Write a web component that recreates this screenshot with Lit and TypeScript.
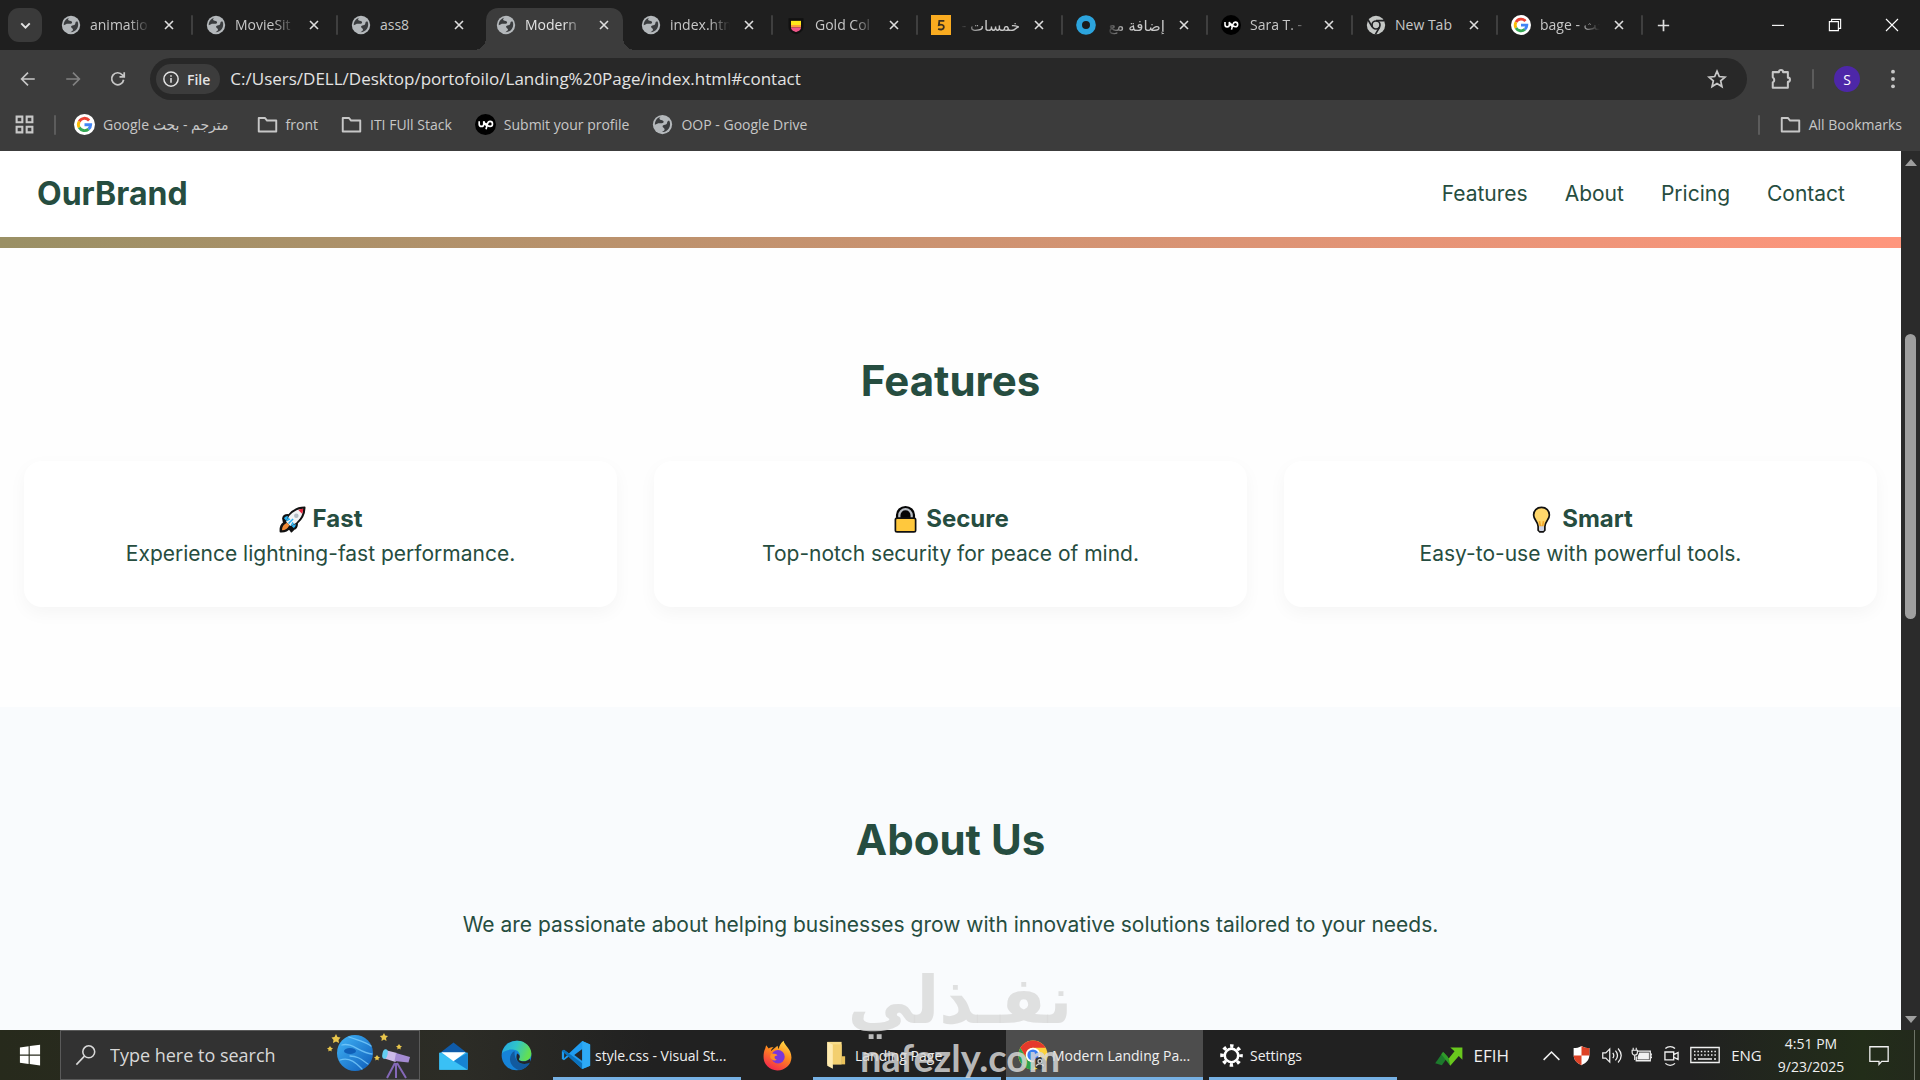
import { LitElement, html, css, svg, nothing, type TemplateResult } from "lit";
import { customElement, property } from "lit/decorators.js";
import { classMap } from "lit/directives/class-map.js";

const UI = css`"Open Sans", "Noto Sans", "DejaVu Sans", sans-serif`;
const PAGE = css`Inter, "Open Sans", sans-serif`;

const shapes: Record<string, TemplateResult> = {
  globe: svg`<circle cx="12" cy="12" r="11" fill="#b4b8bb"/>
    <path d="M10 3.2c-2 1.2-1.800 2.600-.6 3.300 1.400.8 3.200.4 3.800 1.800.5 1.300-.7 2.200-2 2.300-1.700.1-3.900-.5-5.200.4L3.300 12.200C3.100 7.800 6 4.100 10 3.200zM12.500 13.200c1.500-1.200 3.300-.6 4.200-1.800.8-1 .3-2.300 1.300-3.200.5-.5 1.300-.5 1.900-.3 1.200 2.700 1 6-.7 8.600-1.700 2.700-4.700 4.200-7.800 4.200 1-1.200 3.200-1.700 3-3.400-.2-1.300-3.400-2.500-1.900-4.100z" fill="#3a3c3e"/>`,
  google: svg`<circle cx="12" cy="12" r="12" fill="#fff"/>
    <g fill="none" stroke-width="3.400"><path d="M17.300 7.300A7 7 0 0 0 6 8.500" stroke="#ea4335"/>
    <path d="M6 8.500a7 7 0 0 0 0 7" stroke="#fbbc05"/><path d="M6 15.500a7 7 0 0 0 10.600 1.800" stroke="#34a853"/>
    <path d="M16.600 17.300A7 7 0 0 0 19 12.200H12" stroke="#4285f4"/></g>`,
  upwork: svg`<circle cx="12" cy="12" r="12" fill="#000"/>
    <path d="M4.800 8.300v3.300a2.600 2.600 0 0 0 5.200 0V8.300c.8 2.600 2 4.200 3.300 5.300M12.600 17.500l1.700-6.300c.5-1.900 1.500-2.700 2.900-2.700a2.800 2.800 0 1 1 0 5.600c-2.300 0-4-1.700-5.300-3.700" fill="none" stroke="#fff" stroke-width="1.900"/>`,
  shieldGold: svg`<path d="M3 4h18v10c0 5-4 7.500-9 9-5-1.500-9-4-9-9z" fill="#111"/><path d="M6 7h12v5H6z" fill="#ffe81a"/>
    <path d="M6 12h12v3H6z" fill="#ff9d3c"/><path d="M6 15h12c0 3-3 4.500-6 5.400C9 19.500 6 18 6 15z" fill="#f0568a"/>`,
  khamsat: svg`<path d="M0 0h24v24H0z" fill="#f9ab20"/><path d="M16 7h-6l-.6 5c4-1 6.200.2 6 2.700-.2 2.700-3.600 3.500-6.800 1.900" fill="none" stroke="#3a3020" stroke-width="2.200"/>`,
  ring: svg`<circle cx="12" cy="12" r="8.300" fill="#1c1c1c" stroke="#2ca4dd" stroke-width="7"/>`,
  chromeGrey: svg`<circle cx="12" cy="12" r="11" fill="#c4c7c5"/><circle cx="12" cy="12" r="4.800" fill="#c4c7c5" stroke="#202124" stroke-width="2"/>
    <path d="M12 6.800h10M7.600 14.600 2.600 6M16.400 14.600 11.400 23" stroke="#202124" stroke-width="2"/>`,
  close: svg`<path d="m6 6 12 12M18 6 6 18" stroke="currentColor" stroke-width="2.400" fill="none"/>`,
  down: svg`<path d="m6 9 6 6 6-6" stroke="currentColor" stroke-width="2.800" fill="none"/>`,
  plus: svg`<path d="M12 4v16M4 12h16" stroke="currentColor" stroke-width="2.400"/>`,
  minimize: svg`<path d="M4 12.500h16" stroke="currentColor" stroke-width="1.500"/>`,
  restore: svg`<path d="M4.500 7.500h12v12h-12zM7.500 7.500v-3h12v12h-3" stroke="currentColor" stroke-width="1.500" fill="none"/>`,
  winClose: svg`<path d="m4 4 16 16M20 4 4 20" stroke="currentColor" stroke-width="1.500"/>`,
  back: svg`<path d="M21 12H4M12 3.500 3.500 12l8.500 8.500" stroke="currentColor" stroke-width="2.200" fill="none"/>`,
  forward: svg`<path d="M3 12h17M12 3.500l8.500 8.500-8.500 8.500" stroke="currentColor" stroke-width="2.200" fill="none"/>`,
  reload: svg`<path d="M19.500 13A8 8 0 1 1 17.800 6.600L20 9M20.300 3v6.300H14" stroke="currentColor" stroke-width="2.300" fill="none"/>`,
  info: svg`<circle cx="12" cy="12" r="9.500" fill="none" stroke="currentColor" stroke-width="2"/><path d="M12 10.800V17M12 7v2" stroke="currentColor" stroke-width="2"/>`,
  star: svg`<path d="m12 3.500 2.500 5.800 6.200.6-4.700 4.200 1.400 6.200-5.400-3.300-5.400 3.300L8 14.100 3.300 9.900l6.200-.6z" stroke="currentColor" stroke-width="1.900" fill="none"/>`,
  puzzle: svg`<path d="M3 4.500h6.700a2.300 2.300 0 0 1 4.600 0H19.500v6a2.300 2.300 0 0 1 0 4.600v6.400H3v-5.700a3.200 3.200 0 0 0 0-5.600z" stroke="currentColor" stroke-width="2.200" stroke-linejoin="round" fill="none"/>`,
  dots: svg`<g fill="currentColor"><circle cx="12" cy="4" r="2.100"/><circle cx="12" cy="12" r="2.100"/><circle cx="12" cy="20" r="2.100"/></g>`,
  grid: svg`<path d="M3 3h6.500v6.500H3zM14.500 3H21v6.500h-6.500zM3 14.500h6.500V21H3zM14.500 14.500H21V21h-6.500z" stroke="currentColor" stroke-width="2.400" fill="none"/>`,
  folder: svg`<path d="M2 4.500h7l2.500 3H22v12.500H2z" stroke="currentColor" stroke-width="2.200" stroke-linejoin="round" fill="none"/>`,
  rocket: svg`<path d="M3.500 11c.5-2.500 2.500-3.300 5.300-3C12.500 3.500 17 1.200 22.800 1.200c0 5.800-2.300 10.300-6.800 14 .3 2.800-.5 4.800-3 5.500l-2 2-2-3C8 21.500 5 23 1.300 22.800 1 19 2.500 16 4.300 15z" fill="#111" stroke="#111" stroke-width="1.500" stroke-linejoin="round"/>
    <path d="M4.500 11c.8-1.600 2-2 3.600-1.800L6.500 13zM13 19.500c1.600-.8 2-2 1.800-3.600L11 17.500z" fill="#2bb3f3"/>
    <path d="M7 14.800 9.200 17c-1.500 3-3.500 4.400-6.600 4.500.1-3.100 1.400-5.200 4.400-6.700z" fill="#f08a35"/>
    <path d="M9 8.900C12.500 5 16 3 21.500 2.500 21 8 19 11.500 15.100 15L10 17.800 6.300 14z" fill="#f3f3f3"/><path d="M17.200 3.500c1.400-.6 2.700-.9 4.300-1-.1 1.600-.4 2.900-1 4.300z" fill="#e3263c"/>
    <path d="M6.300 14 8.200 10l2 2zM10 17.800l3.500-2-1.600-1.900z" fill="#2bb3f3"/>
    <circle cx="15.400" cy="8.700" r="2" fill="#b4bcc4"/><path d="m8.500 15.500 4-4" stroke="#2bb3f3" stroke-width="1.400"/>`,
  lock: svg`<path d="M4.500 11.500V8a7.500 7 0 0 1 15 0v3.500" fill="#050505" stroke="#050505" stroke-width="2"/><path d="M6.500 11V8.300a5.500 5.500 0 0 1 11 0V11" fill="none" stroke="#b9bec4" stroke-width="2"/>
    <rect x="3" y="10.800" width="18" height="12.200" rx="1.500" fill="#ffc83d" stroke="#111" stroke-width="1.500"/>`,
  bulb: svg`<path d="M12 1.200c-4.300 0-7 3-7 6.800 0 4.300 3.700 5.500 4 10.200v3.300l1.500 1.500h3l1.500-1.500v-3.300C15.300 13.500 19 12.300 19 8c0-3.800-2.700-6.800-7-6.800z" fill="#ffd76b" stroke="#111" stroke-width="1.500"/>
    <path d="M10.200 13.500 11 18h2l.8-4.500" stroke="#f2a52b" stroke-width="1.400" fill="none"/><path d="M9.800 18h4.400v3.500l-1 .8h-2.400l-1-.8z" fill="#cfd4e6"/>`,
  windows: svg`<path d="m1 3.800 9.500-1.300v9H1zM11.700 2.300 23 .8v10.700H11.700zM1 12.700h9.500v9L1 20.400zM11.700 12.700H23v10.700l-11.300-1.500z" fill="#fff"/>`,
  search: svg`<circle cx="15" cy="8.500" r="6.500" fill="none" stroke="currentColor" stroke-width="1.700"/><path d="M10.300 13.200 1.500 22.500" stroke="currentColor" stroke-width="1.700"/>`,
  mail: svg`<path d="M1 10.500 12 2l11 8.500z" fill="#0f5ba9"/><path d="M1 9.800h22V23H1z" fill="#35b8f1"/><path d="M1 9.800 23 23H1z" fill="#3ac0f5"/><path d="M12 16 23 9.800V23z" fill="#1683d2"/><path d="M2.500 9.500h19L12 16.500z" fill="#fff"/>`,
  edge: svg`<defs><linearGradient id="ea" x1="0" y1="0" x2="1" y2=".3"><stop offset="0" stop-color="#25a5e0"/><stop offset=".5" stop-color="#2fc3cc"/><stop offset="1" stop-color="#63df53"/></linearGradient></defs>
    <circle cx="12" cy="12" r="11.500" fill="#1683d8"/><path d="M.7 10.500C2 4 7 .5 12.500.5c6.500 0 11 5 11 10 0 3.500-2.500 6-6.200 6-2.500 0-3.800-1-3.300-2 1.500-2.500.5-6.500-4-7C6 7.200 2.500 8 .7 10.500z" fill="url(#ea)"/>
    <path d="M10.500 8.500c-5 2.500-5.500 11.500 3.500 14.900 4-.6 7-3 8.500-5.900-6 2.500-12.500.5-12-9z" fill="#125a9f"/><path d="M12.400 10.500c2.500 1 2.400 3 1.600 4-.5 1 .8 2 3.300 2 2.200 0 4-.8 5-2l.5 3c-5.500 2.500-12.700.5-10.400-7z" fill="#22262a"/>`,
  vscode: svg`<path d="M17 .8 23.300 3.500v17L17 23.200 6.300 13.200 2.400 16.200.7 15.200v-6.400l1.700-1 3.900 3z" fill="#1f9cf0"/><path d="M17 7.200 10.600 12l6.400 4.800zM2.500 9.500v5L5 12z" fill="#24272a"/><path d="M.7 8.800 2.400 7.800 17 18.500v4.700z" fill="#0b72bd"/><path d="M17 .8 23.300 3.500v17L17 23.200z" fill="#2eaaf5"/>`,
  firefox: svg`<defs><linearGradient id="ff" x1=".8" y1="0" x2=".3" y2="1"><stop offset="0" stop-color="#ffe14a"/><stop offset=".45" stop-color="#ff8a1e"/><stop offset="1" stop-color="#f4254e"/></linearGradient></defs>
    <path d="M2.500 6.500 3.200 4l2 2.500C7 5.500 8 5.500 9 5.700c-1.500 1-2 2-2 2.800L12 4.500l.8 2.700C13.500 4 14.800 2 16.800.5 17 4 22.800 6.500 22.800 13.500A10.800 10.300 0 0 1 1.200 13c0-2.600.4-4.600 1.300-6.500z" fill="url(#ff)"/>
    <circle cx="12.400" cy="13" r="5.200" fill="#7b36d9"/><path d="M7 10.500c2 .2 4-.2 5 1.500-2.800-.1-3 2.500-.5 3.300-2 1.500-5-.3-5.200-2.300z" fill="#ff8f25"/>`,
  explorer: svg`<path d="M5 1.500h11.500v18H5z" fill="#f8dc8a"/><path d="M16.500 13h2.800v6.500h-2.800z" fill="#eac15a"/><path d="M5 1.500l4.500 2.300V23L5 20.500z" fill="#ffebb0"/><path d="M9.500 3.500h7v16h-7z" fill="#f3cf6f"/>`,
  chrome: svg`<circle cx="12" cy="12" r="11.700" fill="#fdd23c"/><path d="M1.900 6.200A11.700 11.700 0 0 1 22.100 6.200H12a5.800 5.800 0 0 0-5 8.700z" fill="#e5392c"/><path d="M1.900 6.200A11.700 11.700 0 0 0 12 23.700l5-8.800a5.800 5.800 0 0 1-10 0z" fill="#2ba24c"/>
    <circle cx="12" cy="12" r="5.800" fill="#fff"/><circle cx="12" cy="12" r="4.500" fill="#3a7df0"/><circle cx="17.500" cy="18.500" r="5" fill="#333"/><circle cx="17.500" cy="17" r="1.500" fill="none" stroke="#ccc"/><path d="M14.500 21c1-2.500 5-2.500 6 0" fill="none" stroke="#ccc"/>`,
  gear: svg`<circle cx="12" cy="12" r="7" fill="none" stroke="#fff" stroke-width="2.600"/><circle cx="12" cy="12" r="9.900" fill="none" stroke="#fff" stroke-width="3.800" stroke-dasharray="3.500 4.275" stroke-dashoffset="1.750"/>`,
  stocks: svg`<path d="M1 18.500 7.500 9l4 4-5 7z" fill="#1d7a2c"/><path d="m7.500 9 4.700 5.500L17 8.500l-3.500-3.200H23.500V15.500l-3-3-7 8z" fill="#69c81d"/><path d="m7.500 9 4.700 5.500 1.300 6L6 11z" fill="#2f9a2a"/>`,
  chevronUp: svg`<path d="m3 17 9-9 9 9" stroke="currentColor" stroke-width="1.800" fill="none"/>`,
  shield: svg`<path d="M12 1c3 2 6 2.500 9 2.500v8c0 6-4 9.500-9 11.500-5-2-9-5.500-9-11.500v-8C6 3.500 9 3 12 1z" fill="#fff"/><path d="M12 1c3 2 6 2.500 9 2.500V12h-9zM12 12v11c-4.500-2-8.500-5-9-11z" fill="#dd4226"/>`,
  sound: svg`<path d="M2 9h3.500l4.500-4.500v15L5.500 15H2zM13.500 9c1.500 2 1.500 4 0 6M16.500 6.500c3 3.500 3 7.500 0 11M19.500 4c4.500 5 4.500 11 0 16" stroke="currentColor" stroke-width="1.400" fill="none"/>`,
  battery: svg`<path d="M8 7h14v11H6v-5" stroke="currentColor" stroke-width="1.500" fill="none"/><path d="M9.500 8.500h11v8h-13v-3z" fill="currentColor"/><path d="M22.500 10.500H24v4h-1.500M2.500 3v3M6 3v3M1.300 6h6v2.500a3 3 0 0 1-6 0zM4.200 11v6" stroke="currentColor" stroke-width="1.300" fill="none"/>`,
  camera: svg`<path d="M4.500 8h10v9h-10zM14.500 11l5-2.500v8l-5-2.500M5 4c3-3 8-3 11 0M5 21c3 3 8 3 11 0" stroke="currentColor" stroke-width="1.500" fill="none"/>`,
  keyboard: svg`<path d="M.8 4.500h28.400v15H.8z" stroke="currentColor" stroke-width="1.300" fill="none"/><path d="M4 8.500h22M4 12h22" stroke="currentColor" stroke-width="1.500" stroke-dasharray="1.500 1.900"/><path d="M4 16h2M8 16h14M24 16h2" stroke="currentColor" stroke-width="1.300"/>`,
  notice: svg`<path d="M2 3h20v16h-7l-3 3.200V19H2z" stroke="currentColor" stroke-width="1.400" fill="none"/>`,
  space: svg`<defs><linearGradient id="pl" x1="0" y1="0" x2="1" y2="1"><stop offset="0" stop-color="#41b5f7"/><stop offset="1" stop-color="#0e5cba"/></linearGradient></defs>
    <circle cx="27" cy="20" r="18" fill="url(#pl)"/><g fill="none" stroke="#7fd0ff" stroke-opacity=".75" stroke-width="1.300" stroke-linecap="round"><path d="M21 4c8 3 17 5 22 9M14 12c10-3 18 8 30 9M12 27c10-3 16 3 22 9M22 23c8 0 12 4 18 8"/></g><ellipse cx="22" cy="18" rx="6" ry="3" fill="#0f5fb8"/>
    <path d="m8 1 1.500 3 3 .5-2 2.500.5 3-3-1.500L5 10l.5-3-2-2.500 3-.5zM56 0l1.200 2.500 2.800.5-2 2 .5 3-2.500-1.500L53.500 8l.3-3-2-2 2.800-.5z" fill="#e9c64c"/><path d="m2 13 1.200 1.700 1.800.6-1.500 1.300.1 2L2 17.500.4 18.600l.1-2L-1 15.300l1.800-.6zM71 11l1.200 1.700 1.800.6-1.500 1.300.1 2-1.600-1.100-1.600 1.100.1-2-1.500-1.300 1.800-.6zM49 22l1.200 1.700 1.800.6-1.500 1.300.1 2-1.600-1.100-1.600 1.100.1-2-1.500-1.300 1.800-.6z" fill="#e9c64c"/>
    <path d="M67 30 59 45M68 30v15M69 30l9 15" stroke="#8468b8" stroke-width="2"/><path d="m57 17 12 3-1.500 9L55 25z" fill="#cdbbe8"/><path d="m68 20 14 4-1.500 5.500-14-1.500z" fill="#a48bd2"/><ellipse cx="57" cy="21" rx="2.600" ry="4.800" fill="#63cdf2" transform="rotate(12 57 21)"/>`,
};

const icon = (name: string, cls = "", box = "0 0 24 24") =>
  html`<svg class="icon ${cls}" viewBox=${box} aria-hidden="true">${shapes[name]}</svg>`;

const shared = css`
  *, *::before, *::after { box-sizing: border-box; }
  button { font: inherit; color: inherit; background: none; border: 0; padding: 0; margin: 0; display: flex; align-items: center; justify-content: center; }
  a { color: inherit; text-decoration: none; }
  input { font: inherit; color: inherit; background: none; border: 0; padding: 0; margin: 0; outline: 0; min-width: 0; }
  .icon { width: 20px; height: 20px; flex: none; display: block; }
`;

interface Tab { icon: string; title: string; rtl?: boolean; active?: boolean; }

const TABS: Tab[] = [
  { icon: "globe", title: "animatio" },
  { icon: "globe", title: "MovieSit" },
  { icon: "globe", title: "ass8" },
  { icon: "globe", title: "Modern", active: true },
  { icon: "globe", title: "index.htm" },
  { icon: "shieldGold", title: "Gold Col" },
  { icon: "khamsat", title: "خمسات -", rtl: true },
  { icon: "ring", title: "إضافة مع", rtl: true },
  { icon: "upwork", title: "Sara T. -" },
  { icon: "chromeGrey", title: "New Tab" },
  { icon: "google", title: "bage - بحث" },
];

@customElement("browser-chrome")
class BrowserChrome extends LitElement {
  static styles = [shared, css`
    :host { display: block; font-family: ${UI}; color: #c7c7c7; background: #3c3c3c; }
    .strip { display: flex; height: 50px; background: #1f1f1f; padding-left: 8px; }
    .menu { width: 34px; height: 34px; margin: 8px 5px 0 0; border-radius: 11px; background: #3a3a3a; color: #e3e3e3; flex: none; }
    .menu .icon { width: 17px; height: 17px; }
    .tab { position: relative; display: flex; align-items: center; flex: 0 1 145px; min-width: 0; height: 50px; padding: 0 14px; font-size: 14px; }
    .tab::after { content: ""; position: absolute; right: -1px; top: 15px; width: 2px; height: 20px; background: #3f3f3f; border-radius: 1px; }
    .tab.active::after, .tab.before::after { display: none; }
    .shape { position: absolute; left: 4px; right: 4px; top: 8px; bottom: 0; background: #3c3c3c; border-radius: 12px 12px 0 0; }
    .shape::before, .shape::after { content: ""; position: absolute; bottom: 0; width: 12px; height: 12px; }
    .shape::before { left: -12px; background: radial-gradient(circle at 0 0, transparent 12px, #3c3c3c 12px); }
    .shape::after { right: -12px; background: radial-gradient(circle at 100% 0, transparent 12px, #3c3c3c 12px); }
    .pick { position: relative; flex: 1; min-width: 0; gap: 9px; height: 34px; }
    .title { flex: 1; min-width: 0; overflow: hidden; white-space: nowrap; text-align: left; line-height: 24px;
      mask-image: linear-gradient(to right, #000 65%, transparent); }
    .title.full { mask-image: none; }
    .title.rtl { direction: rtl; text-align: right; font-size: 15px; mask-image: linear-gradient(to left, #000 65%, transparent); }
    .x { position: relative; width: 22px; height: 22px; flex: none; margin-left: 8px; margin-right: -2px; color: #dedede; }
    .x .icon { width: 16px; height: 16px; }
    .active { color: #e3e3e3; }
    .add { width: 34px; height: 50px; margin-left: 4px; color: #dedede; }
    .add .icon { width: 17px; height: 17px; }
    .window { display: flex; margin-left: auto; color: #fff; }
    .window button { width: 57px; height: 50px; }
    .window .icon { width: 18px; height: 18px; }
    .bar { display: flex; align-items: center; height: 58px; padding: 0 16px; background: #3c3c3c; }
    .nav { display: flex; gap: 21px; padding-right: 20px; color: #c7c7c7; }
    .nav button { width: 24px; height: 24px; }
    .nav .icon { width: 18px; height: 18px; }
    .dim { opacity: .5; }
    .omni { display: flex; align-items: center; flex: 1; height: 42px; border-radius: 21px; background: #282828; padding: 0 19px 0 6px; gap: 10px; min-width: 0; font-size: 17px; color: #e3e3e3; }
    .omni input { flex: 1; line-height: 26px; }
    .chip { height: 30px; border-radius: 15px; background: #3c3c3c; padding: 0 10px 0 6px; gap: 7px; font-size: 14px; font-weight: 600; }
    .chip .icon { width: 18px; height: 18px; }
    .star .icon { width: 22px; height: 22px; color: #c7c7c7; }
    .side { display: flex; align-items: center; gap: 20px; padding-left: 23px; }
    .side .icon { width: 22px; height: 22px; }
    .rule { width: 2px; height: 20px; background: #5c5c5c; border-radius: 1px; }
    .avatar { width: 26px; height: 26px; margin-right: 2px; border-radius: 50%; background: #4d27a8; color: #fff; font-size: 14px; }
    .marks { display: flex; align-items: center; height: 43px; padding: 0 18px 10px 14px; font-size: 14px; gap: 23px; }
    .marks .icon { width: 21px; height: 21px; }
    .mark { display: flex; align-items: center; gap: 8px; white-space: nowrap; line-height: 22px; }
    .apps { display: flex; align-items: center; gap: 19px; margin-right: -5px; }
    .start { margin-right: 5px; }
    .end { margin-left: auto; display: flex; align-items: center; gap: 20px; }
  `];

  render() {
    const mark = (ic: string, text: string, cls = "") => html`<a class="mark ${cls}" href="#">${icon(ic)}<span>${text}</span></a>`;
    return html`
      <div class="strip">
        <button class="menu" aria-label="Search tabs">${icon("down")}</button>
        ${TABS.map((t, i) => html`
          <div class=${classMap({ tab: true, active: !!t.active, before: !!TABS[i + 1]?.active })}>
            ${t.active ? html`<div class="shape"></div>` : nothing}
            <button class="pick">${icon(t.icon)}<span class=${classMap({ title: true, rtl: !!t.rtl, full: t.title === "New Tab" || t.title === "ass8" })}>${t.title}</span></button>
            <button class="x" aria-label="Close tab">${icon("close")}</button>
          </div>`)}
        <button class="add" aria-label="New tab">${icon("plus")}</button>
        <div class="window">
          <button aria-label="Minimize">${icon("minimize")}</button>
          <button aria-label="Restore">${icon("restore")}</button>
          <button aria-label="Close">${icon("winClose")}</button>
        </div>
      </div>
      <div class="bar">
        <div class="nav">
          <button aria-label="Back">${icon("back")}</button>
          <button class="dim" aria-label="Forward">${icon("forward")}</button>
          <button aria-label="Reload">${icon("reload")}</button>
        </div>
        <div class="omni">
          <button class="chip">${icon("info")}File</button>
          <input aria-label="Address" value="C:/Users/DELL/Desktop/portofoilo/Landing%20Page/index.html#contact" />
          <button class="star" aria-label="Bookmark this page">${icon("star")}</button>
        </div>
        <div class="side">
          <button aria-label="Extensions">${icon("puzzle")}</button>
          <span class="rule"></span>
          <button class="avatar">S</button>
          <button aria-label="Menu">${icon("dots")}</button>
        </div>
      </div>
      <div class="marks">
        <div class="apps"><button aria-label="Apps">${icon("grid")}</button><span class="rule"></span></div>
        ${mark("google", "Google مترجم - بحث", "start")}
        ${mark("folder", "front")}
        ${mark("folder", "ITI FUll Stack")}
        ${mark("upwork", "Submit your profile")}
        ${mark("globe", "OOP - Google Drive")}
        <div class="end"><span class="rule"></span>${mark("folder", "All Bookmarks")}</div>
      </div>`;
  }
}

@customElement("feature-card")
class FeatureCard extends LitElement {
  @property() icon = "";
  @property() heading = "";
  @property() text = "";
  static styles = [shared, css`
    :host { display: block; padding: 40px 24px 36px; border-radius: 18px; background: #fff; box-shadow: 0 6px 18px rgba(0, 0, 0, .04); text-align: center; }
    h3 { display: flex; justify-content: center; align-items: center; gap: 7px; margin: 0; font-size: 24px; line-height: 36px; font-weight: 700; }
    h3 .icon { width: 27px; height: 27px; }
    p { margin: 0; font-size: 21px; line-height: 34px; }
  `];
  render() {
    return html`<h3>${icon(this.icon)}${this.heading}</h3><p>${this.text}</p>`;
  }
}

@customElement("landing-page")
class LandingPage extends LitElement {
  static styles = [shared, css`
    :host { display: flex; min-height: 0; overflow: hidden; background: #fefefe; color: #264d40; font-family: ${PAGE}; }
    .page { flex: 1; min-width: 0; overflow: hidden; }
    header { display: flex; align-items: center; justify-content: space-between; height: 86px; padding: 0 56px 0 37px; background: #fff; }
    .brand { font-size: 32px; font-weight: 700; line-height: 44px; }
    nav { display: flex; gap: 37px; font-size: 21px; line-height: 30px; }
    .band { height: 11px; background: linear-gradient(to right, #9a9065, #ff967d); }
    section { padding: 98px 24px 100px; text-align: center; }
    h2 { margin: 0; font-size: 42px; line-height: 70px; font-weight: 700; }
    .cards { display: grid; grid-template-columns: repeat(3, 1fr); gap: 37px; margin-top: 45px; }
    .about { background: #f9fbfd; }
    .about p { margin: 33px 0 0; font-size: 21px; line-height: 34px; }
    .scroll { display: flex; flex-direction: column; align-items: center; width: 19px; background: #2b2b2b; padding: 7px 0; }
    .arrow { border: 6px solid transparent; }
    .up { border-top-width: 0; border-bottom: 7px solid #9f9f9f; margin-top: 1px; }
    .down { border-bottom-width: 0; border-top: 7px solid #9f9f9f; }
    .rest { flex: 167; }
    .thumb { flex: 282; width: 11px; border-radius: 6px; background: #9f9f9f; }
    .rest.after { flex: 394; }
  `];
  render() {
    return html`
      <div class="page">
        <header>
          <a class="brand" href="#">OurBrand</a>
          <nav><a href="#features">Features</a><a href="#about">About</a><a href="#pricing">Pricing</a><a href="#contact">Contact</a></nav>
        </header>
        <div class="band"></div>
        <section>
          <h2>Features</h2>
          <div class="cards">
            <feature-card icon="rocket" heading="Fast" text="Experience lightning-fast performance."></feature-card>
            <feature-card icon="lock" heading="Secure" text="Top-notch security for peace of mind."></feature-card>
            <feature-card icon="bulb" heading="Smart" text="Easy-to-use with powerful tools."></feature-card>
          </div>
        </section>
        <section class="about">
          <h2>About Us</h2>
          <p>We are passionate about helping businesses grow with innovative solutions tailored to your needs.</p>
        </section>
      </div>
      <div class="scroll"><i class="arrow up"></i><i class="rest"></i><i class="thumb"></i><i class="rest after"></i><i class="arrow down"></i></div>`;
  }
}

@customElement("task-bar")
class TaskBar extends LitElement {
  static styles = [shared, css`
    :host { display: flex; height: 50px; color: #f0f0f0; font-family: ${UI}; font-size: 14px;
      background: linear-gradient(to right, #272a1c 0, #2c2c26 24%, #212121 34%, #212121 88%, #222d19 97%, #23291c); }
    .start { width: 60px; }
    .start .icon { width: 22px; height: 22px; }
    .search { display: flex; align-items: center; width: 360px; padding: 0 8px 0 14px; gap: 13px; background: #323232; border: 1px solid #5a5a5a; font-size: 18px; color: #d8d8d8; }
    .search .icon { width: 22px; height: 22px; }
    .search input { flex: 1; }
    .search input::placeholder { color: #d8d8d8; opacity: 1; }
    .search .space { width: 84px; height: 47px; align-self: flex-end; }
    .pin { width: 66px; }
    .pin .icon { width: 31px; height: 31px; }
    .pin.edge-pin { width: 60px; margin-right: 7px; }
    .pin.wide { width: 72px; }
    .app { width: 188px; padding: 0 8px; justify-content: flex-start; gap: 4px; white-space: nowrap; border-bottom: 3px solid #76b0e3; border-top: 3px solid transparent; }
    .app .icon { width: 30px; height: 30px; }
    .app.active { width: 197px; padding-left: 12px; margin: 0 6px 0 5px; background: #4d4d4d; border-top-color: #4d4d4d; }
    .app.settings { padding-left: 11px; gap: 7px; }
    .app.settings .icon { width: 23px; height: 23px; }
    .tray { margin-left: auto; display: flex; align-items: center; }
    .stock { gap: 10px; font-size: 17px; margin-right: 27px; }
    .stock .icon { width: 29px; height: 29px; }
    .tray .small { width: 30px; height: 50px; }
    .small .icon { width: 21px; height: 21px; }
    .keys { margin-left: 4px; }
    .keys .icon { width: 30px; height: 24px; }
    .lang { width: 53px; font-size: 15px; }
    .clock { flex-direction: column; width: 76px; margin-right: 6px; line-height: 23px; }
    .notice { width: 48px; }
    .notice .icon { width: 22px; height: 24px; }
    .edge { width: 6px; margin-left: 11px; align-self: stretch; border-left: 1px solid #6d7367; }
  `];
  render() {
    const small = (name: string, label: string) => html`<button class="small" aria-label=${label}>${icon(name)}</button>`;
    return html`
      <button class="start" aria-label="Start">${icon("windows")}</button>
      <label class="search">${icon("search")}<input placeholder="Type here to search" aria-label="Search" />${icon("space", "space", "-1 -1 84 47")}</label>
      <button class="pin" aria-label="Mail">${icon("mail")}</button>
      <button class="pin edge-pin" aria-label="Edge">${icon("edge")}</button>
      <button class="app">${icon("vscode")}style.css - Visual St...</button>
      <button class="pin wide" aria-label="Firefox">${icon("firefox")}</button>
      <button class="app">${icon("explorer")}Landing Page</button>
      <button class="app active">${icon("chrome")}Modern Landing Pa...</button>
      <button class="app settings">${icon("gear")}Settings</button>
      <div class="tray">
        <button class="stock">${icon("stocks")}EFIH</button>
        ${small("chevronUp", "Hidden icons")}${small("shield", "Security")}${small("sound", "Volume")}${small("battery", "Battery")}${small("camera", "Meet now")}
        <button class="keys" aria-label="Keyboard">${icon("keyboard", "", "0 0 30 24")}</button>
        <button class="lang">ENG</button>
        <button class="clock"><span>4:51 PM</span><span>9/23/2025</span></button>
        <button class="notice" aria-label="Notifications">${icon("notice")}</button>
        <span class="edge"></span>
      </div>`;
  }
}

@customElement("app-root")
class AppRoot extends LitElement {
  static styles = css`
    :host { position: relative; display: grid; grid-template-rows: auto 1fr auto; height: 100vh; overflow: hidden; }
    .mark { position: absolute; left: 50%; bottom: 0; transform: translateX(-50%); display: flex; flex-direction: column; align-items: center; color: rgba(218, 218, 218, .83); pointer-events: none; }
    .arabic { font: 700 66px/66px "DejaVu Sans", sans-serif; }
    .latin { font: 700 38px/46px Lato, sans-serif; }
  `;
  render() {
    return html`
      <browser-chrome></browser-chrome>
      <landing-page></landing-page>
      <task-bar></task-bar>
      <div class="mark"><span class="arabic" lang="ar">نفـذلي</span><span class="latin">nafezly.com</span></div>`;
  }
}
